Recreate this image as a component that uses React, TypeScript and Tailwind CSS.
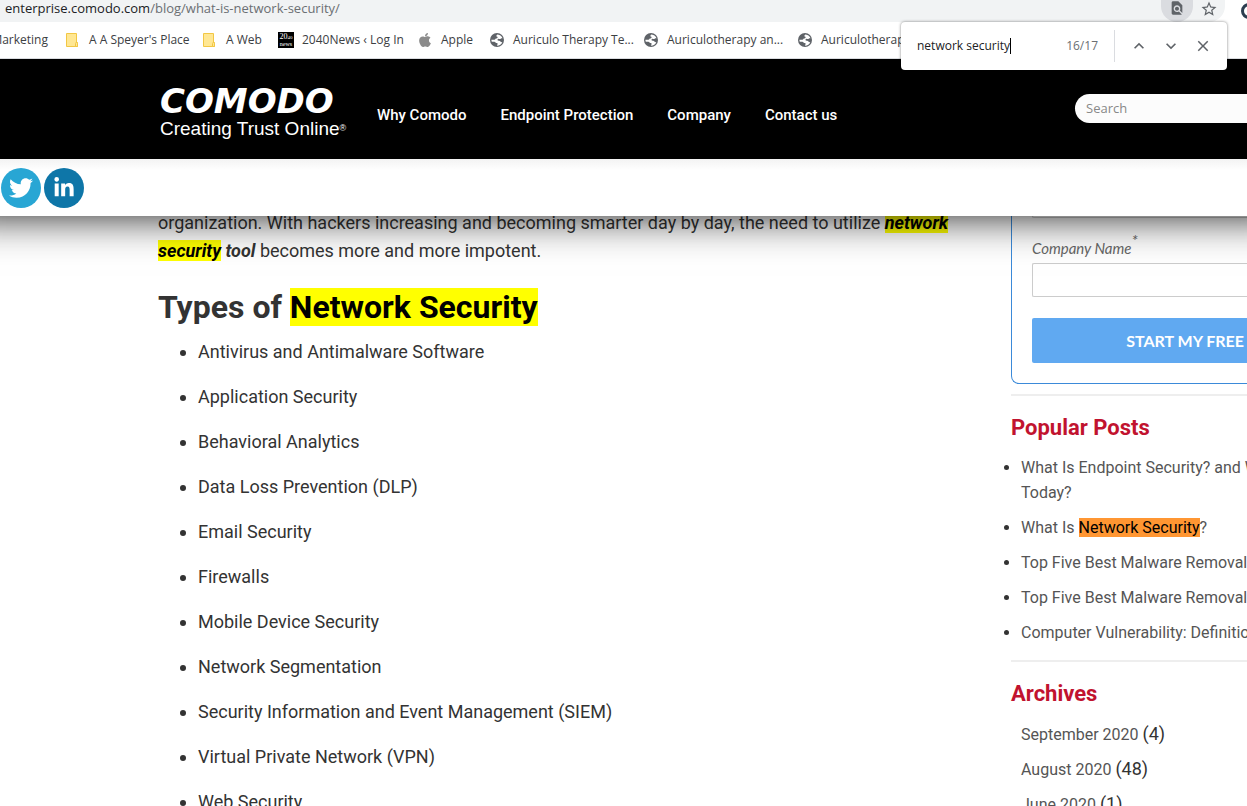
import React, { useState } from 'react';
import { FaApple, FaLinkedinIn, FaTwitter } from 'react-icons/fa';
import { MdClose, MdFindInPage, MdKeyboardArrowDown, MdKeyboardArrowUp, MdStarBorder } from 'react-icons/md';

const networkTypes = [
    'Antivirus and Antimalware Software',
    'Application Security',
    'Behavioral Analytics',
    'Data Loss Prevention (DLP)',
    'Email Security',
    'Firewalls',
    'Mobile Device Security',
    'Network Segmentation',
    'Security Information and Event Management (SIEM)',
    'Virtual Private Network (VPN)',
    'Web Security',
];

const archives = [
    { month: 'September 2020', count: 4 },
    { month: 'August 2020', count: 48 },
    { month: 'June 2020', count: 1 },
];

const FolderIcon = () => (
    <svg className="w-4 h-4" viewBox="0 0 16 16" aria-hidden="true">
        <path d="M1.5 1.5h10v9h1v4h-11z" fill="#ffe793" stroke="#f2c744" />
        <path d="M10.5 14.5v-3l1-1.5 1 1.5v3z" fill="#ffe793" stroke="#f2c744" />
    </svg>
);

const NewsIcon = () => (
    <span className="flex flex-col items-center justify-center w-4 h-4 bg-black text-white font-['Liberation_Serif',serif] leading-none" aria-hidden="true">
        <span className="text-[8px] leading-[7px]">20<span className="text-[5px]">40</span></span>
        <span className="text-[6px] leading-[6px]">news</span>
    </span>
);

const GlobeIcon = () => (
    <svg className="w-4 h-4" viewBox="0 0 16 16" aria-hidden="true">
        <circle cx="8" cy="8" r="7" fill="#5f6368" />
        <path d="M8.6 2.6c-.8.4-1.300.9-1.200 1.500.1.800 1.100.5 1.200 1.300 0 .7-1 .8-1.700 1.200-.6.4-.6 1.100-1.400 1.200H2.400c0 .8.1 1.400.4 2h2.600c1 0 1 .9 1.800 1.200.8.2 1.500.1 1.500.8 0 .6-.6.8-.6 1.900 2.400 0 4.300-1.500 5.200-3.500-.9.2-1.300-.3-1.900-.8-.7-.6-1.700-.5-2.400-.8-.7-.4-.7-1.300 0-1.700.7-.3 1.200.3 2 .2.800-.1 1-.8 1.900-.8h.6C13 4.600 11.200 2.900 8.600 2.600z" fill="#fff" />
    </svg>
);

const bookmarks = [
    { label: "A A Speyer's Place", icon: <FolderIcon />, width: 'w-[137px]' },
    { label: 'A Web', icon: <FolderIcon />, width: 'w-[76px]' },
    { label: '2040News ‹ Log In', icon: <NewsIcon />, width: 'w-[139px]' },
    { label: 'Apple', icon: <FaApple className="w-4 h-4 text-[#8b8b8b]" />, width: 'w-[72px]' },
    { label: 'Auriculo Therapy Te...', icon: <GlobeIcon />, width: 'w-[154px]' },
    { label: 'Auriculotherapy an...', icon: <GlobeIcon />, width: 'w-[154px]' },
    { label: 'Auriculotherapy an...', icon: <GlobeIcon />, width: 'w-[154px]' },
];

const FindBar = () => {
    const [query, setQuery] = useState('network security');

    return (
        <div className="absolute top-[22px] right-5 z-30 flex items-center w-[326px] h-12 pl-4 pr-2 rounded-sm bg-white shadow-[0_0_3px_rgba(0,0,0,0.5)] text-xs">
            <div className="flex flex-1 items-center">
                <input
                    aria-label="Find in page"
                    className="field-sizing-content bg-transparent text-[#202124] outline-none"
                    value={query}
                    onChange={(e) => setQuery(e.target.value)}
                />
                <span className="w-px h-4 bg-black" />
            </div>
            <span className="pr-4 text-[#6b6f73]">16/17</span>
            <div className="flex items-center h-8 pl-2 border-l border-[#dadce0] text-[#5f6368]">
                <button type="button" aria-label="Previous" className="flex items-center justify-center w-8 h-8"><MdKeyboardArrowUp size={20} /></button>
                <button type="button" aria-label="Next" className="flex items-center justify-center w-8 h-8"><MdKeyboardArrowDown size={20} /></button>
                <button type="button" aria-label="Close" className="flex items-center justify-center w-8 h-8"><MdClose size={18} /></button>
            </div>
        </div>
    );
};

const BrowserBar = () => (
    <div className="relative z-30 font-['Open_Sans','Noto_Sans',sans-serif]">
        <div className="flex items-center justify-between h-[22px] bg-white overflow-hidden">
            <div className="flex flex-1 items-center justify-between h-[22px] pl-[5px] bg-[#f1f3f4] rounded-br-2xl">
                <span className="pb-1 text-[13px] text-[#202124]">
                    enterprise.comodo.com<span className="text-[#6b6f73]">/blog/what-is-network-security/</span>
                </span>
                <div className="flex items-center text-[#5f6368]">
                    <button type="button" aria-label="Find in page" className="flex items-start justify-center w-8 h-[22px] rounded-b-2xl bg-[#dadce0]"><MdFindInPage size={16} /></button>
                    <button type="button" aria-label="Bookmark this page" className="flex items-start justify-center w-8 h-[22px]"><MdStarBorder size={18} /></button>
                </div>
            </div>
            <span className="w-[22px] pl-4"><span className="block w-4 h-4 rounded-full border-3 border-[#2c3e50]" /></span>
        </div>
        <div className="flex items-center h-[37px] border-b border-[#dadce0] bg-white overflow-hidden text-xs text-[#3c4043] whitespace-nowrap">
            <a href="#" className="flex justify-end shrink-0 w-12 mr-[17px]">Marketing</a>
            {bookmarks.map((b, i) => (
                <a key={i} href="#" className={`flex shrink-0 items-center gap-2 ${b.width}`}>
                    {b.icon}
                    <span>{b.label}</span>
                </a>
            ))}
        </div>
        <FindBar />
    </div>
);

const NavBar = () => (
    <header className="relative z-20 flex items-center justify-between h-[100px] bg-black overflow-hidden text-white">
        <div className="flex items-center">
            <a href="#" className="flex flex-col w-[217px] ml-[160px] pt-2 whitespace-nowrap">
                <span className="font-['DejaVu_Sans',sans-serif] text-[34px] leading-8 font-bold italic">COMODO</span>
                <span className="font-['Liberation_Sans',sans-serif] text-[19px] leading-6">Creating Trust Online<sup className="text-[9px]">®</sup></span>
            </a>
            <nav className="pt-3 font-['Roboto',sans-serif] text-[15px] font-medium">
                <ul className="flex gap-[34px] whitespace-nowrap">
                    <li><a href="#">Why Comodo</a></li>
                    <li><a href="#">Endpoint Protection</a></li>
                    <li><a href="#">Company</a></li>
                    <li><a href="#">Contact us</a></li>
                </ul>
            </nav>
        </div>
        <input
            aria-label="Search"
            placeholder="Search"
            className="w-[172px] h-[29px] mb-[2px] px-[11px] rounded-l-full bg-[#fcfcfc] font-['Open_Sans',sans-serif] text-[13px] text-black placeholder:text-[#888] outline-none"
        />
    </header>
);

const SocialBar = () => (
    <div className="relative z-10 flex shrink-0 items-center gap-[3px] h-[57px] pl-px bg-linear-to-b from-[#f3f3f3] from-0% to-white to-20% shadow-[0_-40px_40px_40px_rgba(0,0,0,0.9)]">
        <a href="#" aria-label="Twitter" className="flex items-center justify-center w-10 h-10 rounded-full bg-[#28a6d4] text-white"><FaTwitter size={24} /></a>
        <a href="#" aria-label="LinkedIn" className="flex items-center justify-center w-10 h-10 rounded-full bg-[#0e76a8] text-white"><FaLinkedinIn size={22} /></a>
    </div>
);

const Article = () => (
    <main className="flex-1 min-w-0 -mt-[7px] text-lg text-[#333]">
        <p className="leading-7">
            organization. With hackers increasing and becoming smarter day by day, the need to utilize{' '}
            <strong className="italic"><mark className="bg-[#ff0] text-black">network security</mark> tool</strong> becomes more and more impotent.
        </p>
        <h2 className="mt-6 text-[32px] leading-9 font-bold">
            Types of <mark className="bg-[#ff0] text-black">Network Security</mark>
        </h2>
        <ul className="mt-3 pl-10 list-disc">
            {networkTypes.map((t) => (
                <li key={t} className="mb-4 leading-[29px]">{t}</li>
            ))}
        </ul>
    </main>
);

const Sidebar = () => (
    <aside className="w-[236px] shrink-0 -mt-8 whitespace-nowrap text-[#333]">
        <form className="pl-5 pb-5 border-l border-b border-[#3b8ad9] rounded-bl-lg font-['Lato',sans-serif]">
            <input aria-label="Phone" className="block w-full h-[34px] border border-r-0 border-[#ccc] rounded-l-xs" />
            <label htmlFor="company" className="block h-[45px] pt-4 leading-[29px] text-[15px] italic text-[#666]">
                Company Name<sup className="text-base">*</sup>
            </label>
            <input id="company" className="block w-full h-[34px] px-2 border border-r-0 border-[#ccc] rounded-l-xs bg-white" />
            <button type="button" className="block w-full h-[45px] mt-[21px] pr-[3px] rounded-l-xs bg-[#60a9f1] text-right text-base font-bold text-white">START MY FREE</button>
        </form>
        <section className="mt-[10px] pt-4 border-t-2 border-[#eee]">
            <h3 className="text-[22px] leading-8 font-bold text-[#c1132f]">Popular Posts</h3>
            <ul className="mt-[11px] pl-[10px] list-disc overflow-visible leading-[25px] [&_a]:text-[#555]">
                <li className="mb-[10px]"><a href="#">What Is Endpoint Security? and W<br />Today?</a></li>
                <li className="mb-[10px]"><a href="#">What Is <mark className="bg-[#ff9632] text-black">Network Security</mark>?</a></li>
                <li className="mb-[10px]"><a href="#">Top Five Best Malware Removal</a></li>
                <li className="mb-[10px]"><a href="#">Top Five Best Malware Removal</a></li>
                <li className="mb-[10px]"><a href="#">Computer Vulnerability: Definition</a></li>
            </ul>
        </section>
        <section className="mt-[15px] pt-4 border-t-2 border-[#eee]">
            <h3 className="text-[22px] leading-8 font-bold text-[#c1132f]">Archives</h3>
            <ul className="mt-[11px] pl-[10px]">
                {archives.map((a) => (
                    <li key={a.month} className="flex items-baseline gap-1 h-[25px] mb-[10px] text-lg leading-[25px]">
                        <a href="#" className="text-base leading-[25px] text-[#555]">{a.month}</a>
                        <span>({a.count})</span>
                    </li>
                ))}
            </ul>
        </section>
    </aside>
);

const App = () => {
    return (
        <div className="flex flex-col h-screen overflow-hidden bg-white font-['Roboto',sans-serif]">
            <BrowserBar />
            <NavBar />
            <SocialBar />
            <div className="flex flex-1 min-h-0 gap-[60px] pl-[158px]">
                <Article />
                <Sidebar />
            </div>
        </div>
    );
};

export default App;
